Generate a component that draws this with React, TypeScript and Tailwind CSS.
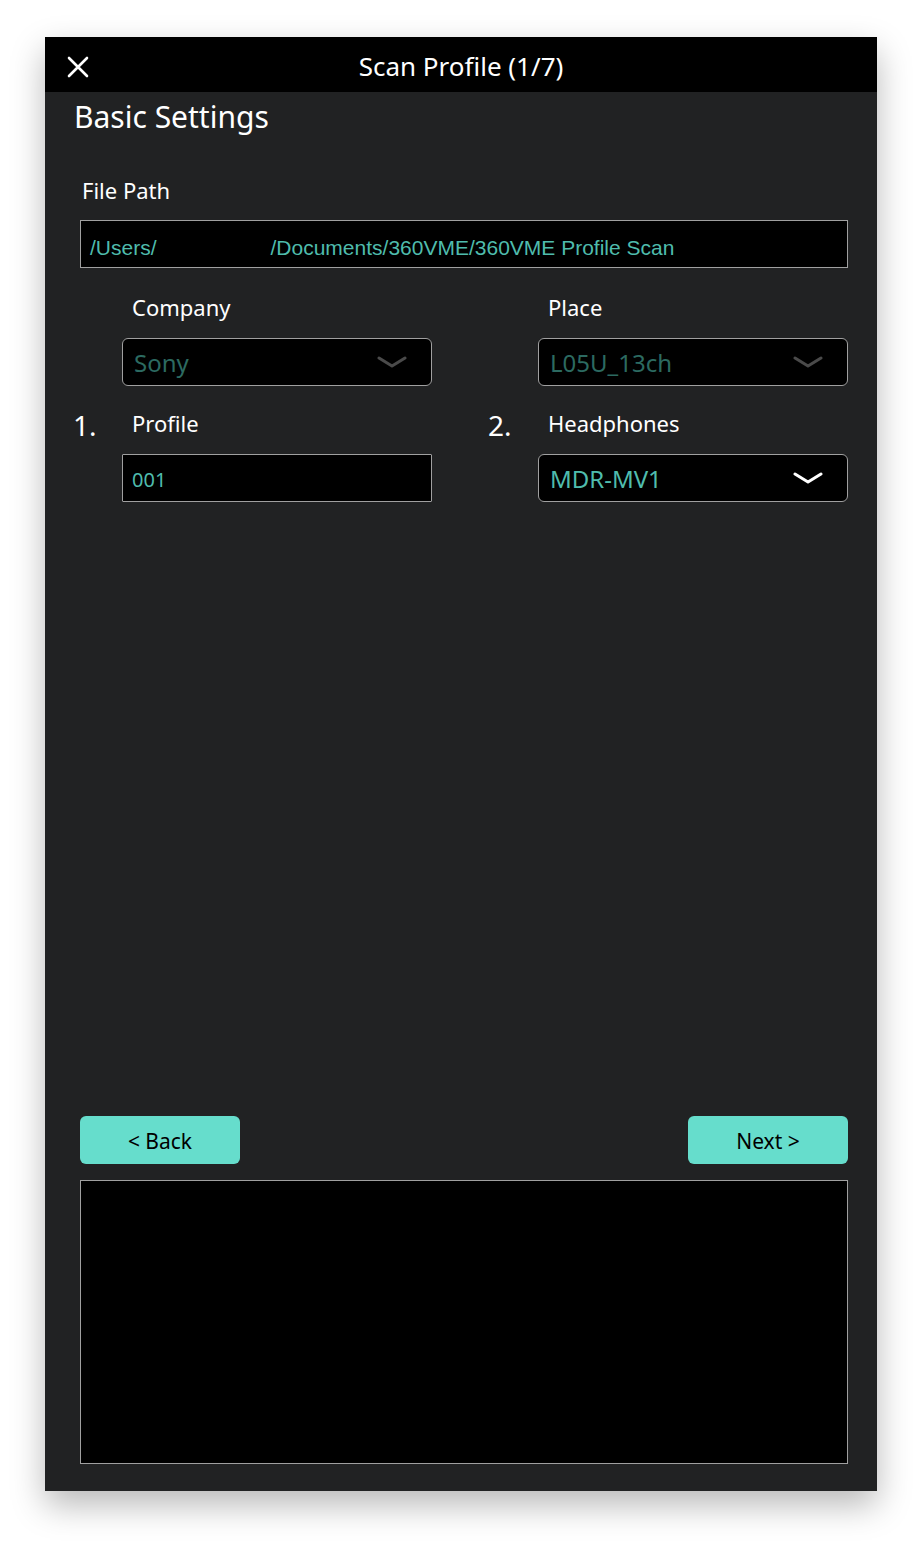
import React from "react";

function Chevron({ color }: { color: string }) {
  return (
    <svg width="30" height="14" viewBox="0 0 30 14" fill="none">
      <polyline points="2,3 15,11 28,3" stroke={color} strokeWidth="3" strokeLinecap="round" strokeLinejoin="round" />
    </svg>
  );
}

function Select({ value, dim }: { value: string; dim?: boolean }) {
  return (
    <div className="h-[48px] rounded-[6px] border border-[#a0a0a0] bg-black flex items-center justify-between pl-[11px] pr-[24px]">
      <span className={`text-[24px] leading-none pt-[2px] ${dim ? "text-[#2c6a61]" : "text-[#4fbcad]"}`}>{value}</span>
      <Chevron color={dim ? "#4a4a4a" : "#ffffff"} />
    </div>
  );
}

export default function App() {
  return (
    <div className="w-[922px] h-[1544px] bg-white pt-[37px]" style={{ fontFamily: '"Noto Sans", "Open Sans", sans-serif' }}>
      <div className="ml-[45px] w-[832px] h-[1454px] bg-[#212223] flex flex-col shadow-[0_14px_32px_rgba(0,0,0,0.28)]">
        <div className="h-[55px] bg-black relative flex items-center justify-center shrink-0">
          <svg className="absolute left-[22px] top-[19px]" width="22" height="22" viewBox="0 0 22 22">
            <path d="M2 2 L20 20 M20 2 L2 20" stroke="#fff" strokeWidth="2.6" strokeLinecap="round" />
          </svg>
          <span className="text-white text-[26px] leading-none mt-[3px]">Scan Profile (1/7)</span>
        </div>
        <div className="flex-1 flex flex-col pl-[35px] pr-[29px] pb-[27px]">
          <div className="mt-[5px] -ml-[6px] text-white text-[30px] leading-[40px]">Basic Settings</div>
          <div className="mt-[38px] ml-[2px] text-white text-[22px] leading-[30px]">File Path</div>
          <div className="mt-[15px] h-[48px] border border-[#a0a0a0] bg-black flex items-center pl-[9px] pt-[7px]" style={{ fontFamily: '"Liberation Sans", Arial, sans-serif' }}>
            <span className="text-[#4fbcad] text-[21px] leading-none whitespace-pre">/Users/</span>
            <span className="text-[#4fbcad] text-[21px] leading-none ml-[114px] whitespace-pre">/Documents/360VME/360VME Profile Scan</span>
          </div>
          <div className="-ml-[8px] grid grid-cols-[50px_310px_56px_50px_310px]">
            <div className="mt-[25px]" />
            <div className="mt-[24px] pl-[10px] text-white text-[22px] leading-[30px]">Company</div>
            <div />
            <div className="mt-[25px]" />
            <div className="mt-[24px] pl-[10px] text-white text-[22px] leading-[30px]">Place</div>

            <div />
            <div className="mt-[16px]"><Select value="Sony" dim /></div>
            <div />
            <div />
            <div className="mt-[16px]"><Select value="L05U_13ch" dim /></div>

            <div className="mt-[22px] pl-[1px] text-white text-[28px] leading-[26px] pt-[4px]">1.</div>
            <div className="mt-[22px] pl-[10px] text-white text-[22px] leading-[30px]">Profile</div>
            <div />
            <div className="mt-[22px] text-white text-[28px] leading-[26px] pt-[4px]">2.</div>
            <div className="mt-[22px] pl-[10px] text-white text-[22px] leading-[30px]">Headphones</div>

            <div />
            <div className="mt-[16px] h-[48px] border border-[#a0a0a0] rounded-[1px] bg-black flex items-center pl-[9px] pt-[4px]">
              <span className="text-[#4fbcad] text-[20px] leading-none">001</span>
            </div>
            <div />
            <div />
            <div className="mt-[16px]"><Select value="MDR-MV1" /></div>
          </div>
          <div className="flex-1" />
          <div className="flex justify-between">
            <button className="w-[160px] h-[48px] rounded-[6px] bg-[#66ddcc] text-black text-[21px] leading-none flex items-center justify-center pt-[3px]">&lt; Back</button>
            <button className="w-[160px] h-[48px] rounded-[6px] bg-[#66ddcc] text-black text-[21px] leading-none flex items-center justify-center pt-[3px]">Next &gt;</button>
          </div>
          <div className="mt-[16px] h-[284px] border border-[#a0a0a0] bg-black" />
        </div>
      </div>
    </div>
  );
}
